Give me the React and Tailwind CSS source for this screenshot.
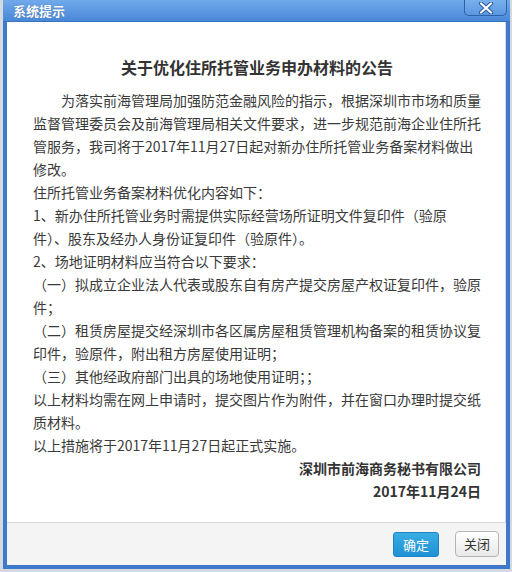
import React from 'react';

const FONT = '"Microsoft YaHei", "Noto Sans CJK SC", "Noto Sans", sans-serif';

const lines = [
  { text: '为落实前海管理局加强防范金融风险的指示，根据深圳市市场和质量', indent: true },
  { text: '监督管理委员会及前海管理局相关文件要求，进一步规范前海企业住所托' },
  { text: '管服务，我司将于2017年11月27日起对新办住所托管业务备案材料做出' },
  { text: '修改。' },
  { text: '住所托管业务备案材料优化内容如下：' },
  { text: '1、新办住所托管业务时需提供实际经营场所证明文件复印件（验原' },
  { text: '件）、股东及经办人身份证复印件（验原件）。' },
  { text: '2、场地证明材料应当符合以下要求：' },
  { text: '（一）拟成立企业法人代表或股东自有房产提交房屋产权证复印件，验原' },
  { text: '件；' },
  { text: '（二）租赁房屋提交经深圳市各区属房屋租赁管理机构备案的租赁协议复' },
  { text: '印件，验原件，附出租方房屋使用证明；' },
  { text: '（三）其他经政府部门出具的场地使用证明；；' },
  { text: '以上材料均需在网上申请时，提交图片作为附件，并在窗口办理时提交纸' },
  { text: '质材料。' },
  { text: '以上措施将于2017年11月27日起正式实施。' },
];

const CloseIcon = () => (
  <svg width="16" height="12" viewBox="0 0 16 12">
    <path d="M3 1.5 L13 10.5 M13 1.5 L3 10.5" stroke="#2d5a9a" strokeWidth="4.2" strokeLinecap="round" fill="none" />
    <path d="M3 1.5 L13 10.5 M13 1.5 L3 10.5" stroke="#ffffff" strokeWidth="2.2" strokeLinecap="round" fill="none" />
  </svg>
);

export default function App() {
  return (
    <div className="w-[512px] h-[572px] bg-[#d5d9e0] flex pl-[3px] pr-[2px] pb-[3px]" style={{ fontFamily: FONT }}>
      <div className="flex-1 flex flex-col bg-[#3d79cd]">
        {/* Title bar */}
        <div className="h-[22px] flex items-start justify-between bg-gradient-to-b from-[#70aaeb] to-[#4a88d8] border-b border-[#3a72c2]">
          <div className="pl-[10px] pt-[2px] text-[13px] leading-[18px] font-bold text-white [text-shadow:0_0_1px_#2d5a9a]">
            系统提示
          </div>
          <button className="mr-[3px] w-[43px] h-[16px] flex items-center justify-center rounded-b-[5px] border border-t-0 border-[#2f5fa6] bg-gradient-to-b from-[#78b0ee] to-[#5b97e0]">
            <CloseIcon />
          </button>
        </div>

        <div className="flex-1 flex flex-col mx-[4px] mb-[4px]">
          {/* Body */}
          <div className="flex-1 bg-white pt-[33px] pl-[26px] pr-[24px] text-[#333] border-r border-[#d8d8d8]">
            <div className="text-center text-[16px] leading-[24px] font-bold text-[#333]">
              关于优化住所托管业务申办材料的公告
            </div>
            <div className="mt-[10px] text-[14px] leading-[23px] text-[#3a3a3a]">
              {lines.map((l, i) => (
                <div key={i} className={`whitespace-nowrap ${l.indent ? 'pl-[28px]' : ''}`}>
                  {l.text}
                </div>
              ))}
              <div className="text-right font-bold text-[#333]">深圳市前海商务秘书有限公司</div>
              <div className="text-right font-bold text-[#333]">2017年11月24日</div>
            </div>
          </div>

          {/* Footer */}
          <div className="h-[43px] bg-[#f4f4f5] border-t border-[#d9dadd] flex items-center justify-end gap-[16px] pr-[7px]">
            <button className="w-[46px] h-[25px] rounded-[3px] border border-[#1b84c2] bg-gradient-to-b from-[#39aee4] to-[#1f90d2] text-white text-[13px] leading-[23px]">
              确定
            </button>
            <button className="w-[44px] h-[26px] rounded-[4px] border border-[#b4b4b4] bg-gradient-to-b from-[#ffffff] to-[#e9e9e9] text-[#333] text-[13px] leading-[24px]">
              关闭
            </button>
          </div>
        </div>
      </div>
    </div>
  );
}
